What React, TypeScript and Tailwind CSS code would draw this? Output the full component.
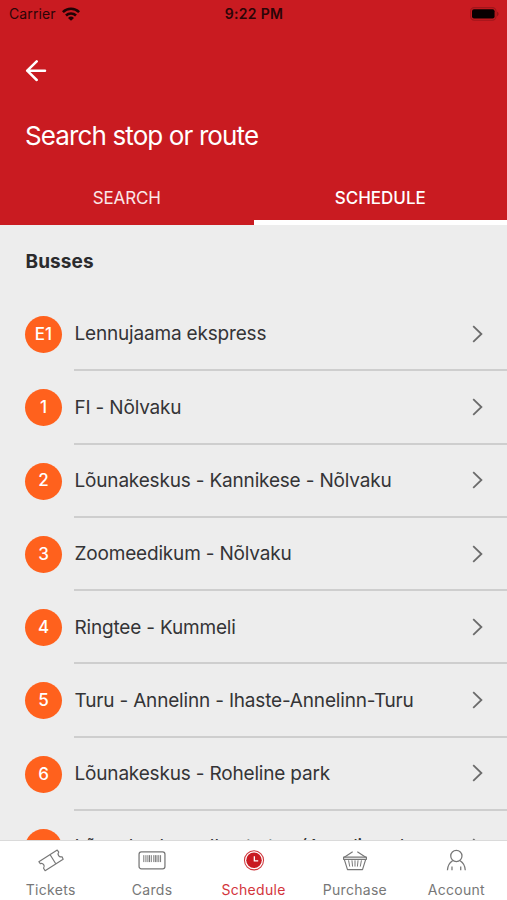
import type { ReactNode } from "react";

type Route = { line: string; name: string };

const routes: Route[] = [
  { line: "E1", name: "Lennujaama ekspress" },
  { line: "1", name: "FI - Nõlvaku" },
  { line: "2", name: "Lõunakeskus - Kannikese - Nõlvaku" },
  { line: "3", name: "Zoomeedikum - Nõlvaku" },
  { line: "4", name: "Ringtee - Kummeli" },
  { line: "5", name: "Turu - Annelinn - Ihaste-Annelinn-Turu" },
  { line: "6", name: "Lõunakeskus - Roheline park" },
  { line: "7", name: "Lõunakeskus - Ihaste tee (Annelinna k" },
];

function WifiIcon() {
  return (
    <svg width="18" height="14" viewBox="0 0 18 14" fill="none" stroke="#200305" strokeWidth="2.6">
      <path d="M.9 5.1a11.6 11.6 0 0 1 16.2 0" />
      <path d="M4 8.5a7.2 7.2 0 0 1 10 0" />
      <path d="M9 13.8 6 10.9a4.4 4.4 0 0 1 6 0z" fill="#200305" stroke="none" />
    </svg>
  );
}

function BatteryIcon() {
  return (
    <svg width="30" height="14" viewBox="0 0 30 14">
      <rect x="1.6" y="0.6" width="25.4" height="12.6" rx="3.6" fill="none" stroke="#a0161b" strokeWidth="1.1" />
      <rect x="3" y="2.2" width="22.6" height="9.2" rx="2" fill="#080001" />
      <path d="M28.2 4.8c1.7.6 1.7 3.8 0 4.4z" fill="#8a1217" />
    </svg>
  );
}

function BackIcon() {
  return (
    <svg
      width="22"
      height="22"
      viewBox="0 0 22 22"
      fill="none"
      stroke="#fff"
      strokeWidth="2.5"
      strokeLinecap="round"
      strokeLinejoin="round"
    >
      <path d="M20 10.7H2.2M11.7 1.4 2.2 10.7l9.5 9.3" />
    </svg>
  );
}

function Chevron() {
  return (
    <svg width="12" height="18" viewBox="0 0 12 18" fill="none" stroke="#6b6b6b" strokeWidth="1.8">
      <path d="M1.2 1.2 9.4 9l-8.2 7.8" />
    </svg>
  );
}

function TicketIcon() {
  return (
    <svg width="32" height="28" viewBox="0 0 32 28" fill="none" stroke="#777" strokeWidth="1.3" strokeLinejoin="round">
      <path d="M2.4 15.4 23 2.3l1.7 2.4a3.2 3.2 0 0 0-.2 3.8c1 1.5 2.6 1.7 3.9 1.3l1.2 2.7L9.4 25.4l-1.7-2.8c.9-1.2 1-2.6.1-3.9-1-1.4-2.5-1.7-3.8-1.2z" />
      <path d="m15 7.6 6.3 10" />
    </svg>
  );
}

function CardIcon() {
  return (
    <svg width="32" height="28" viewBox="0 0 32 28" fill="none" stroke="#777">
      <rect x="1.5" y="4.3" width="29" height="19" rx="2.6" strokeWidth="1.4" />
      <path
        d="M6.8 8v7.8M9.2 8v7.8M11.4 8v7.8M13.2 8v7.8M15.2 8v7.8M18 8v7.8M19.8 8v7.8M21.6 8v7.8M23.6 8v7.8M25.6 8v7.8"
        strokeWidth="1.1"
      />
    </svg>
  );
}

function ClockIcon() {
  return (
    <svg width="32" height="28" viewBox="0 0 32 28" fill="none">
      <circle cx="16" cy="13.8" r="10.7" stroke="#d0393f" strokeWidth="1.2" />
      <circle cx="16" cy="13.8" r="8.7" fill="#c91b22" />
      <path d="M16.4 9.3v5.2h4.3" stroke="#fff" strokeWidth="1.5" />
    </svg>
  );
}

function BasketIcon() {
  return (
    <svg width="32" height="28" viewBox="0 0 32 28" fill="none" stroke="#777" strokeWidth="1.3" strokeLinejoin="round">
      <path d="M3.2 10.3h25.6v2.4H3.2zM4 12.7l3.6 11.6h16.8L28 12.7" />
      <path d="m4 10.3 9.4-6.1M28 10.3l-9.4-6.1" />
      <path d="m8.8 13.8 1.3 7M12.6 13.8l.7 7M16 13.8v7M19.4 13.8l-.7 7M23.2 13.8l-1.3 7" strokeWidth="1.1" />
    </svg>
  );
}

function PersonIcon() {
  return (
    <svg width="32" height="28" viewBox="0 0 32 28" fill="none" stroke="#777" strokeWidth="1.4">
      <circle cx="16.4" cy="9" r="6.3" />
      <path d="M6.4 25c.2-5 2.2-8.6 5.8-10.8M26.4 25c-.2-5-2.2-8.6-5.8-10.8M11.5 20.6V25M21.3 20.6V25" />
    </svg>
  );
}

function RouteRow({ line, name }: Route) {
  return (
    <li className="flex h-[73.3px] shrink-0 pl-[25px]">
      <span className="mt-[18px] flex size-[37px] shrink-0 items-center justify-center rounded-full bg-[#ff611d] text-[17px] font-medium text-white">
        {line}
      </span>
      <div className="ml-3 flex flex-1 items-center justify-between border-b-2 border-[#cecece] pr-[23.5px]">
        <span className="pt-[2px] pl-[0.5px] text-[19px] tracking-[-0.18px] whitespace-nowrap">{name}</span>
        <Chevron />
      </div>
    </li>
  );
}

function NavItem({ label, icon, active }: { label: string; icon: ReactNode; active?: boolean }) {
  return (
    <a className={`flex flex-1 flex-col items-center pt-[7px] ${active ? "text-[#d3353c]" : "text-[#777]"}`}>
      {icon}
      <span className="mt-[7px] text-[14px] leading-5 tracking-[0.3px]">{label}</span>
    </a>
  );
}

export default function App() {
  return (
    <div className="flex h-[900px] w-[507px] flex-col overflow-hidden bg-[#ededed] font-['Inter','Liberation_Sans',sans-serif] text-[#343436]">
      <header className="flex h-[225px] shrink-0 flex-col bg-[#c91b21] text-white">
        <div className="grid h-[27px] shrink-0 grid-cols-3 items-center pr-2 pl-[9px] text-[14px] text-[#2b0507]">
          <div className="flex items-center gap-[6px]">
            <span className="tracking-[0.1px]">Carrier</span>
            <WifiIcon />
          </div>
          <span className="text-center font-semibold tracking-[0.3px]">9:22 PM</span>
          <div className="flex justify-end">
            <BatteryIcon />
          </div>
        </div>
        <div className="mt-[33px] pl-[25px]">
          <BackIcon />
        </div>
        <h1 className="mt-[38px] pl-[25px] text-[26px] leading-8 tracking-[-0.88px]">Search stop or route</h1>
        <nav className="mt-auto flex h-[54px] text-[17px]">
          <a className="flex flex-1 items-center justify-center border-b-[5px] border-transparent pt-[7px] tracking-[-0.1px] text-white/90">
            SEARCH
          </a>
          <a className="flex flex-1 items-center justify-center border-b-[5px] border-white pt-[7px] font-medium">
            SCHEDULE
          </a>
        </nav>
      </header>

      <main className="flex min-h-0 flex-1 flex-col overflow-hidden">
        <h2 className="mt-[25px] mb-6 pl-[25.5px] text-[19px] leading-6 font-bold tracking-[0.1px] text-[#2b2b2d]">
          Busses
        </h2>
        <ul className="flex flex-col">
          {routes.map((r) => (
            <RouteRow key={r.line} {...r} />
          ))}
        </ul>
      </main>

      <footer className="flex h-[60px] shrink-0 border-t border-[#dadada] bg-white">
        <NavItem label="Tickets" icon={<TicketIcon />} />
        <NavItem label="Cards" icon={<CardIcon />} />
        <NavItem label="Schedule" icon={<ClockIcon />} active />
        <NavItem label="Purchase" icon={<BasketIcon />} />
        <NavItem label="Account" icon={<PersonIcon />} />
      </footer>
    </div>
  );
}
